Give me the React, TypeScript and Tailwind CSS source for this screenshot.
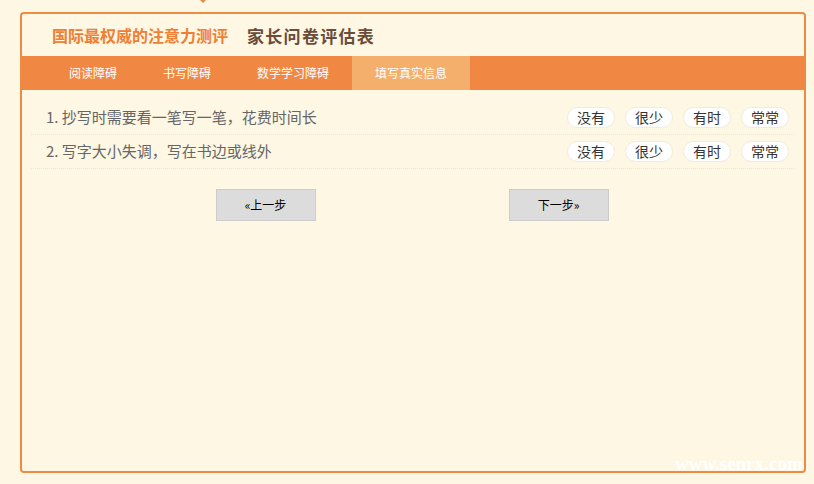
import React from "react";

const questions = [
  "1. 抄写时需要看一笔写一笔，花费时间长",
  "2. 写字大小失调，写在书边或线外",
];
const options = ["没有", "很少", "有时", "常常"];
const tabs = ["阅读障碍", "书写障碍", "数学学习障碍", "填写真实信息"];

export default function App() {
  return (
    <div
      className="relative w-[814px] h-[484px] bg-[#fef7e4] pt-[12px] pl-[20px] overflow-hidden"
      style={{ fontFamily: '"Noto Sans CJK SC", "Noto Sans", sans-serif' }}
    >
      <div className="absolute left-[200px] top-0 w-0 h-0 border-l-[3px] border-r-[3px] border-t-[3px] border-l-transparent border-r-transparent border-t-[#ef8a45]" />
      <div className="w-[786px] h-[461px] border-2 border-[#ef8a45] rounded-[4px] flex flex-col">
        <div className="h-[42px] flex items-center pl-[30px] shrink-0">
          <span className="text-[16px] leading-none font-bold text-[#ee7f35]">国际最权威的注意力测评</span>
          <span className="ml-[19px] text-[17px] leading-none font-bold text-[#6b4c3b] tracking-[1.3px]">家长问卷评估表</span>
        </div>
        <div className="h-[34px] bg-[#f08844] flex pl-[24px] shrink-0">
          {tabs.map((t, i) => (
            <div
              key={t}
              className={`h-full flex items-center px-[23px] text-[12px] text-white ${i === 3 ? "bg-[#f5af6d]" : ""}`}
            >
              {t}
            </div>
          ))}
        </div>
        <div className="pt-[11px] ml-[9px] mr-[10px]">
          {questions.map((q) => (
            <div
              key={q}
              className="h-[34px] flex items-center justify-between border-b border-dotted border-[#f0e6d0] pl-[15px] pr-[5px]"
            >
              <span className="text-[15px] text-[#666666]">{q}</span>
              <div className="flex gap-[10px]">
                {options.map((o) => (
                  <div
                    key={o}
                    className="w-[48px] h-[21px] rounded-full bg-white border border-[#f0ebe0] flex items-center justify-center text-[14px] text-[#333333]"
                  >
                    {o}
                  </div>
                ))}
              </div>
            </div>
          ))}
        </div>
        <div className="mt-[20px] flex justify-center gap-[193px] pr-[2px]">
          <div className="w-[100px] h-[32px] bg-[#dcdcdc] border border-[#cccccc] flex items-center justify-center text-[12px] text-black">
            «上一步
          </div>
          <div className="w-[100px] h-[32px] bg-[#dcdcdc] border border-[#cccccc] flex items-center justify-center text-[12px] text-black">
            下一步»
          </div>
        </div>
      </div>
      <div
        className="absolute left-[675px] top-[454px] text-[19px] font-black text-white leading-none"
        style={{ fontFamily: '"Liberation Serif", "DejaVu Serif", serif' }}
      >
        www.senrx.com
      </div>
    </div>
  );
}
